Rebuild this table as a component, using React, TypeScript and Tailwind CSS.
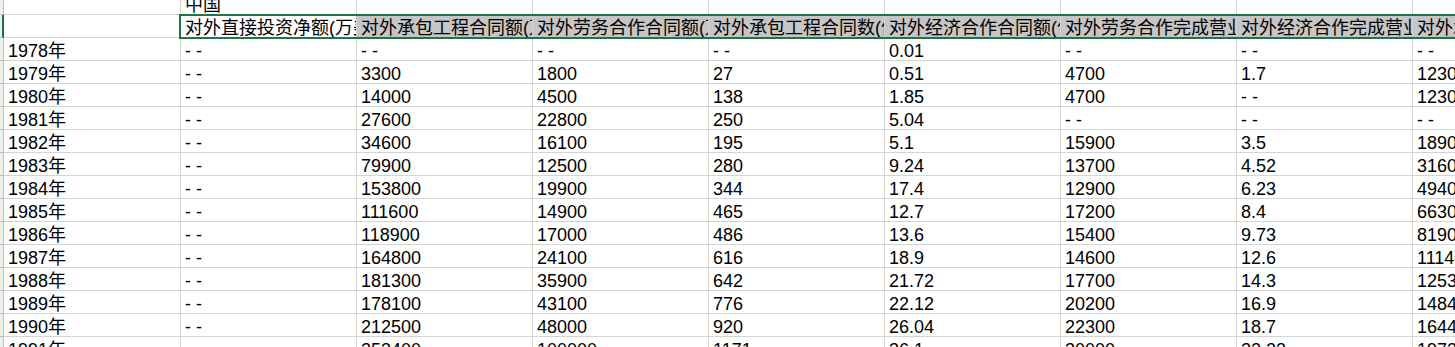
import React from "react";

const headers = [
    "对外直接投资净额(万美元)",
    "对外承包工程合同额(万美元)",
    "对外劳务合作合同额(万美元)",
    "对外承包工程合同数(份)",
    "对外经济合作合同额(亿美元)",
    "对外劳务合作完成营业额(万美元)",
    "对外经济合作完成营业额(亿美元)",
    "对外承包工程完成营业额(万美元)",
];

const rows: string[][] = [
    ["1978年", "--", "--", "--", "--", "0.01", "--", "--", "--"],
    ["1979年", "--", "3300", "1800", "27", "0.51", "4700", "1.7", "12300"],
    ["1980年", "--", "14000", "4500", "138", "1.85", "4700", "--", "12300"],
    ["1981年", "--", "27600", "22800", "250", "5.04", "--", "--", "--"],
    ["1982年", "--", "34600", "16100", "195", "5.1", "15900", "3.5", "18900"],
    ["1983年", "--", "79900", "12500", "280", "9.24", "13700", "4.52", "31600"],
    ["1984年", "--", "153800", "19900", "344", "17.4", "12900", "6.23", "49400"],
    ["1985年", "--", "111600", "14900", "465", "12.7", "17200", "8.4", "66300"],
    ["1986年", "--", "118900", "17000", "486", "13.6", "15400", "9.73", "81900"],
    ["1987年", "--", "164800", "24100", "616", "18.9", "14600", "12.6", "111400"],
    ["1988年", "--", "181300", "35900", "642", "21.72", "17700", "14.3", "125300"],
    ["1989年", "--", "178100", "43100", "776", "22.12", "20200", "16.9", "148400"],
    ["1990年", "--", "212500", "48000", "920", "26.04", "22300", "18.7", "164400"],
    ["1991年", "--", "253400", "100000", "1171", "36.1", "30000", "22.23", "197300"],
];

function Cell({ text, className = "" }: { text?: string; className?: string }) {
    return (
        <div
            className={
                "w-[176px] shrink-0 h-full overflow-hidden whitespace-nowrap border-r border-b border-[#d4d4d4] pl-[4px] pt-[3px] leading-[20px] " +
                className
            }
        >
            <span className={text === "--" ? "tracking-[5px]" : ""}>{text}</span>
        </div>
    );
}

export default function App() {
    return (
        <div className="relative w-[1455px] h-[347px] overflow-hidden bg-white text-black text-[18px] font-['Liberation_Sans','Noto_Sans_CJK_SC',sans-serif]">
            {/* row 1 */}
            <div className="flex h-[15px]">
                <div className="w-[4px] shrink-0 bg-[#efefef] border-r border-b border-[#bdbdbd]" />
                <div className="w-[177px] shrink-0 border-r border-b border-[#d4d4d4]" />
                <div className="w-[176px] shrink-0 overflow-hidden whitespace-nowrap border-r border-b border-[#d4d4d4] pl-[4px] leading-[11px]">
                    中国
                </div>
                {headers.slice(1).map((_, i) => (
                    <div key={i} className="w-[176px] shrink-0 border-r border-b border-[#d4d4d4]" />
                ))}
            </div>

            {/* row 2 - selected header */}
            <div className="flex h-[23px]">
                <div className="w-[4px] shrink-0 bg-[#efefef] border-r-2 border-b border-r-[#217346] border-b-[#bdbdbd]" />
                <div className="w-[177px] shrink-0 border-r border-b border-[#d4d4d4]" />
                {headers.map((h, i) => (
                    <Cell key={i} text={h} className={i === 0 ? "bg-white" : "bg-[#c6c6c6]"} />
                ))}
            </div>

            {rows.map((r, ri) => (
                <div key={ri} className="flex h-[23px]">
                    <div className="w-[4px] shrink-0 bg-[#efefef] border-r border-b border-[#bdbdbd]" />
                    {r.map((v, ci) => (
                        <Cell key={ci} text={v} className={ci === 0 ? "w-[177px]" : ""} />
                    ))}
                </div>
            ))}

            {/* selection outline */}
            <div className="absolute left-[179px] top-[14px] h-[25px] right-[-10px] border-2 border-[#217346] pointer-events-none" />
        </div>
    );
}
